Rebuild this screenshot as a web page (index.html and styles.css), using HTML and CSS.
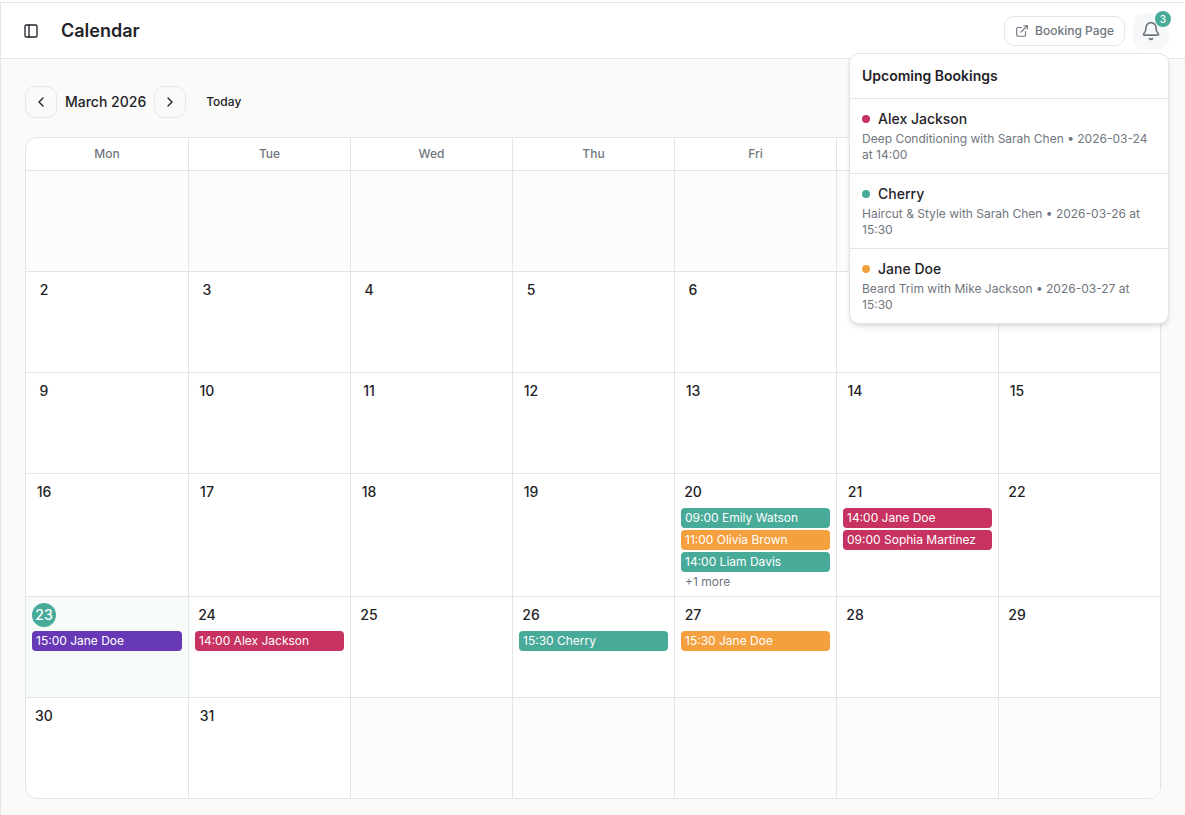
FILE: index.html
```html
<!DOCTYPE html>
<html lang="en">
<head>
<meta charset="utf-8">
<title>Calendar</title>
<link rel="stylesheet" href="styles.css">
</head>
<body>
<div class="app">
  <header class="topbar">
    <button class="icon-button" type="button" aria-label="Toggle sidebar">
      <svg width="16" height="16" viewBox="0 0 24 24" fill="none" stroke="currentColor" stroke-width="2" stroke-linecap="round" stroke-linejoin="round"><rect x="3" y="3" width="18" height="18" rx="2"/><path d="M9 3v18"/></svg>
    </button>
    <h1 class="page-title">Calendar</h1>
    <div class="topbar-actions">
      <a class="booking-link" href="#booking">
        <svg width="14" height="14" viewBox="0 0 24 24" fill="none" stroke="currentColor" stroke-width="2" stroke-linecap="round" stroke-linejoin="round"><path d="M15 3h6v6"/><path d="M10 14 21 3"/><path d="M18 13v6a2 2 0 0 1-2 2H5a2 2 0 0 1-2-2V8a2 2 0 0 1 2-2h6"/></svg>
        Booking Page
      </a>
      <div class="notifications">
        <button class="bell-button" type="button" aria-label="Notifications" aria-expanded="true">
          <svg width="20" height="20" viewBox="0 0 24 24" fill="none" stroke="currentColor" stroke-width="2" stroke-linecap="round" stroke-linejoin="round"><path d="M10.268 21a2 2 0 0 0 3.464 0"/><path d="M3.262 15.326A1 1 0 0 0 4 17h16a1 1 0 0 0 .74-1.673C19.41 13.956 18 12.499 18 8A6 6 0 0 0 6 8c0 4.499-1.411 5.956-2.738 7.326"/></svg>
          <span class="badge">3</span>
        </button>
        <section class="popover" aria-label="Upcoming Bookings">
          <h2 class="popover-title">Upcoming Bookings</h2>
          <ul class="booking-list">
            <li class="booking">
              <div class="booking-name"><span class="dot rose"></span>Alex Jackson</div>
              <p class="booking-detail">Deep Conditioning with Sarah Chen • 2026-03-24 at 14:00</p>
            </li>
            <li class="booking">
              <div class="booking-name"><span class="dot teal"></span>Cherry</div>
              <p class="booking-detail">Haircut &amp; Style with Sarah Chen • 2026-03-26 at 15:30</p>
            </li>
            <li class="booking">
              <div class="booking-name"><span class="dot orange"></span>Jane Doe</div>
              <p class="booking-detail">Beard Trim with Mike Jackson • 2026-03-27 at 15:30</p>
            </li>
          </ul>
        </section>
      </div>
    </div>
  </header>
  <main class="content">
    <div class="toolbar">
      <button class="nav-button" type="button" aria-label="Previous month">
        <svg width="16" height="16" viewBox="0 0 24 24" fill="none" stroke="currentColor" stroke-width="2" stroke-linecap="round" stroke-linejoin="round"><path d="M15 18l-6-6 6-6"/></svg>
      </button>
      <span class="month">March 2026</span>
      <button class="nav-button" type="button" aria-label="Next month">
        <svg width="16" height="16" viewBox="0 0 24 24" fill="none" stroke="currentColor" stroke-width="2" stroke-linecap="round" stroke-linejoin="round"><path d="M9 18l6-6-6-6"/></svg>
      </button>
      <button class="today-button" type="button">Today</button>
    </div>
    <div class="calendar">
      <table class="month-table">
        <thead>
          <tr><th>Mon</th><th>Tue</th><th>Wed</th><th>Thu</th><th>Fri</th><th></th><th></th></tr>
        </thead>
        <tbody>
          <tr>
            <td class="outside"></td><td class="outside"></td><td class="outside"></td><td class="outside"></td><td class="outside"></td><td class="outside"></td>
            <td></td>
          </tr>
          <tr>
            <td><span class="day">2</span></td><td><span class="day">3</span></td><td><span class="day">4</span></td><td><span class="day">5</span></td><td><span class="day">6</span></td><td></td><td></td>
          </tr>
          <tr>
            <td><span class="day">9</span></td><td><span class="day">10</span></td><td><span class="day">11</span></td><td><span class="day">12</span></td><td><span class="day">13</span></td><td><span class="day">14</span></td><td><span class="day">15</span></td>
          </tr>
          <tr>
            <td><span class="day">16</span></td><td><span class="day">17</span></td><td><span class="day">18</span></td><td><span class="day">19</span></td>
            <td>
              <span class="day">20</span>
              <div class="events">
                <button class="event teal" type="button">09:00 Emily Watson</button>
                <button class="event orange" type="button">11:00 Olivia Brown</button>
                <button class="event teal" type="button">14:00 Liam Davis</button>
                <span class="more">+1 more</span>
              </div>
            </td>
            <td>
              <span class="day">21</span>
              <div class="events">
                <button class="event rose" type="button">14:00 Jane Doe</button>
                <button class="event rose" type="button">09:00 Sophia Martinez</button>
              </div>
            </td>
            <td><span class="day">22</span></td>
          </tr>
          <tr>
            <td class="today">
              <span class="day">23</span>
              <div class="events"><button class="event purple" type="button">15:00 Jane Doe</button></div>
            </td>
            <td>
              <span class="day">24</span>
              <div class="events"><button class="event rose" type="button">14:00 Alex Jackson</button></div>
            </td>
            <td><span class="day">25</span></td>
            <td>
              <span class="day">26</span>
              <div class="events"><button class="event teal" type="button">15:30 Cherry</button></div>
            </td>
            <td>
              <span class="day">27</span>
              <div class="events"><button class="event orange" type="button">15:30 Jane Doe</button></div>
            </td>
            <td><span class="day">28</span></td><td><span class="day">29</span></td>
          </tr>
          <tr>
            <td><span class="day">30</span></td><td><span class="day">31</span></td>
            <td class="outside"></td><td class="outside"></td><td class="outside"></td><td class="outside"></td><td class="outside"></td>
          </tr>
        </tbody>
      </table>
    </div>
  </main>
</div>
</body>
</html>
```
FILE: styles.css
```css
:root {
  --line: #e2e5e6;
  --text: #1f2328;
  --muted: #70767e;
  --teal: #48aa98;
  --rose: #c73260;
  --orange: #f5a03e;
  --purple: #6839b6;
}

* {
  box-sizing: border-box;
}

body {
  margin: 0;
  padding-top: 2px;
  background: #fff;
  color: var(--text);
  font-family: Inter, "Liberation Sans", sans-serif;
  font-size: 14px;
  line-height: 20px;
}

button {
  font: inherit;
  color: inherit;
  cursor: pointer;
}

h1, h2, p, ul {
  margin: 0;
  padding: 0;
}

svg {
  display: block;
  flex: none;
}

.app {
  display: flex;
  flex-direction: column;
  min-height: calc(100vh - 2px);
  border-top: 1px solid var(--line);
  border-left: 1px solid var(--line);
  background: #fafaf9;
}

.topbar {
  display: flex;
  align-items: center;
  height: 56px;
  padding: 0 16px;
  border-bottom: 1px solid var(--line);
  background: #fff;
}

.icon-button {
  display: flex;
  align-items: center;
  justify-content: center;
  width: 28px;
  height: 28px;
  padding: 0;
  border: 0;
  border-radius: 6px;
  background: none;
}

.page-title {
  margin-left: 16px;
  font-size: 18px;
  font-weight: 600;
  line-height: 28px;
}

.topbar-actions {
  display: flex;
  align-items: center;
  gap: 8px;
  margin-left: auto;
}

.booking-link {
  display: flex;
  align-items: center;
  gap: 6px;
  height: 30px;
  padding: 0 10px;
  border: 1px solid var(--line);
  border-radius: 10px;
  color: var(--muted);
  font-size: 12px;
  font-weight: 500;
  line-height: 16px;
  text-decoration: none;
}

.notifications {
  position: relative;
}

.bell-button {
  position: relative;
  display: flex;
  align-items: center;
  justify-content: center;
  width: 36px;
  height: 36px;
  padding: 0;
  border: 0;
  border-radius: 10px;
  background: #f7f8fa;
  color: var(--muted);
}

.badge {
  position: absolute;
  top: -2px;
  right: -2px;
  width: 16px;
  height: 16px;
  border-radius: 8px;
  background: var(--teal);
  color: #fff;
  font-size: 10px;
  font-weight: 500;
  line-height: 16px;
  text-align: center;
}

.popover {
  position: absolute;
  z-index: 10;
  top: calc(100% + 4px);
  right: 0;
  width: 320px;
  border: 1px solid var(--line);
  border-radius: 10px;
  background: #fff;
  box-shadow: 0 4px 6px -1px rgba(0, 0, 0, 0.1), 0 2px 4px -2px rgba(0, 0, 0, 0.1);
}

.popover-title {
  padding: 12px;
  font-size: 14px;
  font-weight: 600;
  line-height: 20px;
}

.booking-list {
  list-style: none;
}

.booking {
  padding: 10px 12px;
  border-top: 1px solid var(--line);
}

.booking-name {
  display: flex;
  align-items: center;
  gap: 8px;
  font-weight: 500;
}

.dot {
  width: 8px;
  height: 8px;
  border-radius: 4px;
}

.booking-detail {
  margin-top: 2px;
  color: var(--muted);
  font-size: 12px;
  line-height: 16px;
}

.content {
  flex: 1;
  padding: 27px 24px 16px;
}

.toolbar {
  display: flex;
  align-items: center;
  gap: 8px;
  margin-bottom: 19px;
}

.nav-button {
  display: flex;
  align-items: center;
  justify-content: center;
  width: 32px;
  height: 32px;
  padding: 0;
  border: 1px solid #e6e8e8;
  border-radius: 10px;
  background: #fafaf9;
}

.month {
  font-weight: 500;
}

.today-button {
  padding: 8px 12px;
  border: 0;
  background: none;
  font-size: 12px;
  font-weight: 500;
  line-height: 16px;
}

.calendar {
  overflow: hidden;
  border: 1px solid var(--line);
  border-radius: 12px;
  background: #fff;
}

.month-table {
  width: 100%;
  border-spacing: 0;
  table-layout: fixed;
}

th {
  height: 32px;
  padding: 8px;
  color: var(--muted);
  font-size: 12px;
  font-weight: 500;
  line-height: 16px;
}

td {
  height: 101px;
  padding: 6px;
  border-top: 1px solid var(--line);
  vertical-align: top;
}

th + th,
td + td {
  border-left: 1px solid var(--line);
}

.outside {
  background: #fcfcfc;
}

.today {
  background: #f6fbfa;
}

.day {
  display: flex;
  align-items: center;
  justify-content: center;
  width: 24px;
  height: 24px;
  border-radius: 12px;
  font-weight: 500;
}

.today .day {
  background: var(--teal);
  color: #fff;
}

.events {
  display: flex;
  flex-direction: column;
  gap: 2px;
  margin-top: 4px;
}

.event {
  overflow: hidden;
  padding: 2px 4px;
  border: 0;
  border-radius: 4px;
  color: #fff;
  font-size: 12px;
  line-height: 16px;
  text-align: left;
  text-overflow: ellipsis;
  white-space: nowrap;
}

.more {
  padding: 0 4px;
  color: var(--muted);
  font-size: 12px;
  line-height: 16px;
}

.teal {
  background: var(--teal);
}

.rose {
  background: var(--rose);
}

.orange {
  background: var(--orange);
}

.purple {
  background: var(--purple);
}
```
